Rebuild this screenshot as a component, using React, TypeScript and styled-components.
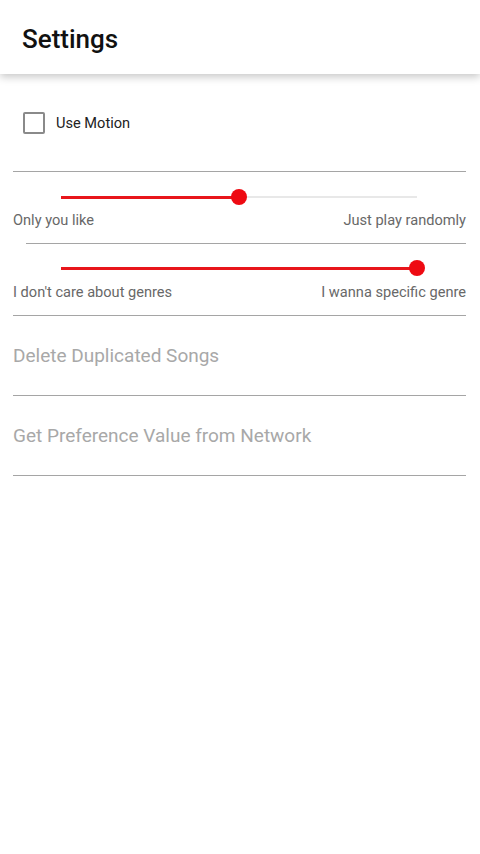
import React from "react";
import styled, { createGlobalStyle } from "styled-components";

const GlobalStyle = createGlobalStyle`
  html, body {
    margin: 0;
    padding: 0;
    background: #ffffff;
    font-family: Roboto, "Liberation Sans", sans-serif;
  }
`;

const Header = styled.header`
  height: 74px;
  box-sizing: border-box;
  display: flex;
  align-items: center;
  padding: 4px 0 0 22px;
  background: #ffffff;
  box-shadow: 0 3px 8px rgba(0, 0, 0, 0.22);
  position: relative;
`;

const Title = styled.h1`
  margin: 0;
  font-size: 26px;
  font-weight: 500;
  color: #111111;
`;

const Content = styled.main`
  padding: 0 14px 0 13px;
`;

const CheckRow = styled.label`
  display: flex;
  align-items: center;
  gap: 11px;
  margin-top: 38px;
  padding: 0 0 37px 10px;
  font-size: 14.6px;
  color: #222222;
`;

const CheckBox = styled.span`
  width: 22px;
  height: 22px;
  box-sizing: border-box;
  border: 2px solid #8a8a8a;
  border-radius: 2px;
`;

const Divider = styled.hr<{ $inset?: number }>`
  margin: 0 0 0 ${({ $inset }) => $inset ?? 0}px;
  border: none;
  border-top: 1px solid #a5a5a5;
`;

const SliderBlock = styled.div<{ $top: number; $gap: number }>`
  padding-top: ${({ $top }) => $top}px;
  padding-bottom: 13px;
  display: flex;
  flex-direction: column;
  gap: ${({ $gap }) => $gap}px;
`;

const TrackArea = styled.div`
  height: 16px;
  margin: 0 49px 0 48px;
  display: flex;
  align-items: center;
`;

const Track = styled.div`
  position: relative;
  flex: 1;
  height: 2px;
  background: #e8e8e8;
`;

const Fill = styled.div`
  height: 3px;
  margin-top: -0.5px;
  background: #e8161b;
`;

const Thumb = styled.span`
  position: absolute;
  top: 50%;
  width: 16px;
  height: 16px;
  margin: -8px 0 0 -8px;
  border-radius: 50%;
  background: #ee0a12;
`;

const LabelRow = styled.div`
  display: flex;
  justify-content: space-between;
  font-size: 14.6px;
  line-height: 20px;
  color: #686868;
`;

const ActionRow = styled.div`
  padding: 28px 0 27px;
  font-size: 19px;
  line-height: 24px;
  color: #a8a8a8;
`;

interface SliderProps {
  value: number;
  left: string;
  right: string;
  top: number;
  gap: number;
}

const Slider = ({ value, left, right, top, gap }: SliderProps) => (
  <SliderBlock $top={top} $gap={gap}>
    <TrackArea>
      <Track>
        <Fill style={{ width: `${value}%` }} />
        <Thumb style={{ left: `${value}%` }} />
      </Track>
    </TrackArea>
    <LabelRow>
      <span>{left}</span>
      <span>{right}</span>
    </LabelRow>
  </SliderBlock>
);

const App = () => (
  <>
    <GlobalStyle />
    <Header>
      <Title>Settings</Title>
    </Header>
    <Content>
      <CheckRow>
        <CheckBox />
        Use Motion
      </CheckRow>
      <Divider />
      <Slider value={50} left="Only you like" right="Just play randomly" top={17} gap={5} />
      <Divider $inset={13} />
      <Slider value={100} left="I don't care about genres" right="I wanna specific genre" top={16} gap={6} />
      <Divider />
      <ActionRow>Delete Duplicated Songs</ActionRow>
      <Divider />
      <ActionRow>Get Preference Value from Network</ActionRow>
      <Divider />
    </Content>
  </>
);

export default App;
